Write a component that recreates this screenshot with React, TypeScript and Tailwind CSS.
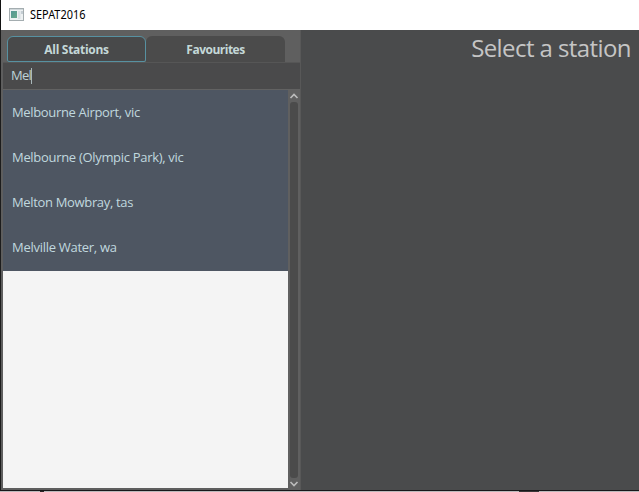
import React from "react";

const stations = [
  { name: "Melbourne Airport, vic", spacing: "tracking-[-0.34px]" },
  { name: "Melbourne (Olympic Park), vic", spacing: "tracking-[-0.31px]" },
  { name: "Melton Mowbray, tas", spacing: "tracking-[-0.34px]" },
  { name: "Melville Water, wa", spacing: "tracking-[-0.28px]" },
];

function WindowIcon() {
  return (
    <svg className="block shrink-0" width="15" height="13" viewBox="0 0 15 13">
      <defs>
        <linearGradient id="pane" x1="0" y1="0" x2="1" y2="1">
          <stop offset="0" stopColor="#559795" />
          <stop offset="1" stopColor="#68a98b" />
        </linearGradient>
      </defs>
      <rect x="0.5" y="0.5" width="14" height="12" fill="#edf1f2" stroke="#a4adb0" />
      <path d="M1 1.5h13" stroke="#cfd7da" />
      <rect x="2" y="3" width="6" height="7" fill="url(#pane)" />
      <rect x="9" y="3" width="2.5" height="8" fill="#d9e0e4" />
      <rect x="12" y="3" width="2" height="3" fill="#c4cdd3" />
    </svg>
  );
}

function Chevron({ down = false }: { down?: boolean }) {
  return (
    <svg className="block" width="10" height="6" viewBox="0 0 10 6" fill="none" stroke="#bdbdbd" strokeWidth="1.6">
      <path d={down ? "M1.5 1L5 4.5L8.5 1" : "M1.5 5L5 1.5L8.5 5"} />
    </svg>
  );
}

export default function App() {
  return (
    <div className="flex h-[492px] w-[639px] flex-col overflow-hidden bg-[#4a4b4c] font-['Open_Sans','Noto_Sans',sans-serif]">
      <header className="flex h-[30px] shrink-0 items-center border-l border-[#111] bg-white pb-[2px] pl-2">
        <WindowIcon />
        <span className="ml-[6px] origin-left scale-x-[0.91] whitespace-nowrap pt-[2px] font-['Noto_Sans',sans-serif] text-[12px] leading-4 text-black">
          SEPAT2016
        </span>
      </header>
      <main className="flex h-[461px] shrink-0 border-b border-l border-b-[#18181a] border-l-[#1c1c1c]">
        <aside className="flex w-[300px] shrink-0 flex-col border-l-2 border-r border-l-[#5e5e5e] border-r-[#585858]">
          <nav className="flex h-8 shrink-0 items-end bg-[#5f5f5f] pl-[4px] text-[12px] font-bold text-[#c4d8d8]">
            <div className="flex h-[26px] w-[139px] items-center justify-center rounded-t-[6px] rounded-b-[2px] border border-[#5791a1] bg-[#48494a]">
              <span className="whitespace-nowrap pt-px tracking-[-0.3px]">All Stations</span>
            </div>
            <div className="flex h-[26px] w-[139px] items-center justify-center rounded-t-[6px] bg-[#4b4b4b]">
              <span className="whitespace-nowrap pt-px tracking-[-0.5px]">Favourites</span>
            </div>
          </nav>
          <div className="flex h-7 shrink-0 items-center border-y border-t-[#565656] border-b-[#626262] bg-[#4a4a4b] pl-2 text-[13px] text-[#bdd2d7]">
            <span className="tracking-[-0.7px]">Mel</span>
            <i className="block h-4 w-px bg-[#a8b7ba]" />
          </div>
          <section className="flex min-h-0 flex-1">
            <div className="flex w-[285px] flex-col border-b-2 border-[#5e5e5e] bg-[#f4f4f4]">
              <ul className="h-[181px] shrink-0 bg-[#4e5662] text-[13px] text-[#c0d8df]">
                {stations.map((station) => (
                  <li key={station.name} className="flex h-[45px] items-center pl-[9px]">
                    <span className={`whitespace-nowrap ${station.spacing}`}>{station.name}</span>
                  </li>
                ))}
              </ul>
            </div>
            <div className="flex w-3 flex-col items-center justify-between bg-[#606060] pt-[3px] pb-[3px]">
              <Chevron />
              <div className="my-[3px] w-2 flex-1 rounded-[3px] bg-[#4b4b4b]" />
              <Chevron down />
            </div>
          </section>
        </aside>
        <section className="flex flex-1 justify-end bg-[#4a4b4c] pr-[8px]">
          <h1 className="whitespace-nowrap text-[24px] leading-9 tracking-[-0.58px] text-[#c5c5c5]">Select a station</h1>
        </section>
      </main>
      <footer className="flex h-px shrink-0 bg-[#bcb9bb]">
        <div className="ml-[40px] h-full w-[4px] bg-[#292526]" />
        <div className="ml-[475px] h-full w-5 bg-[#393637]" />
      </footer>
    </div>
  );
}
